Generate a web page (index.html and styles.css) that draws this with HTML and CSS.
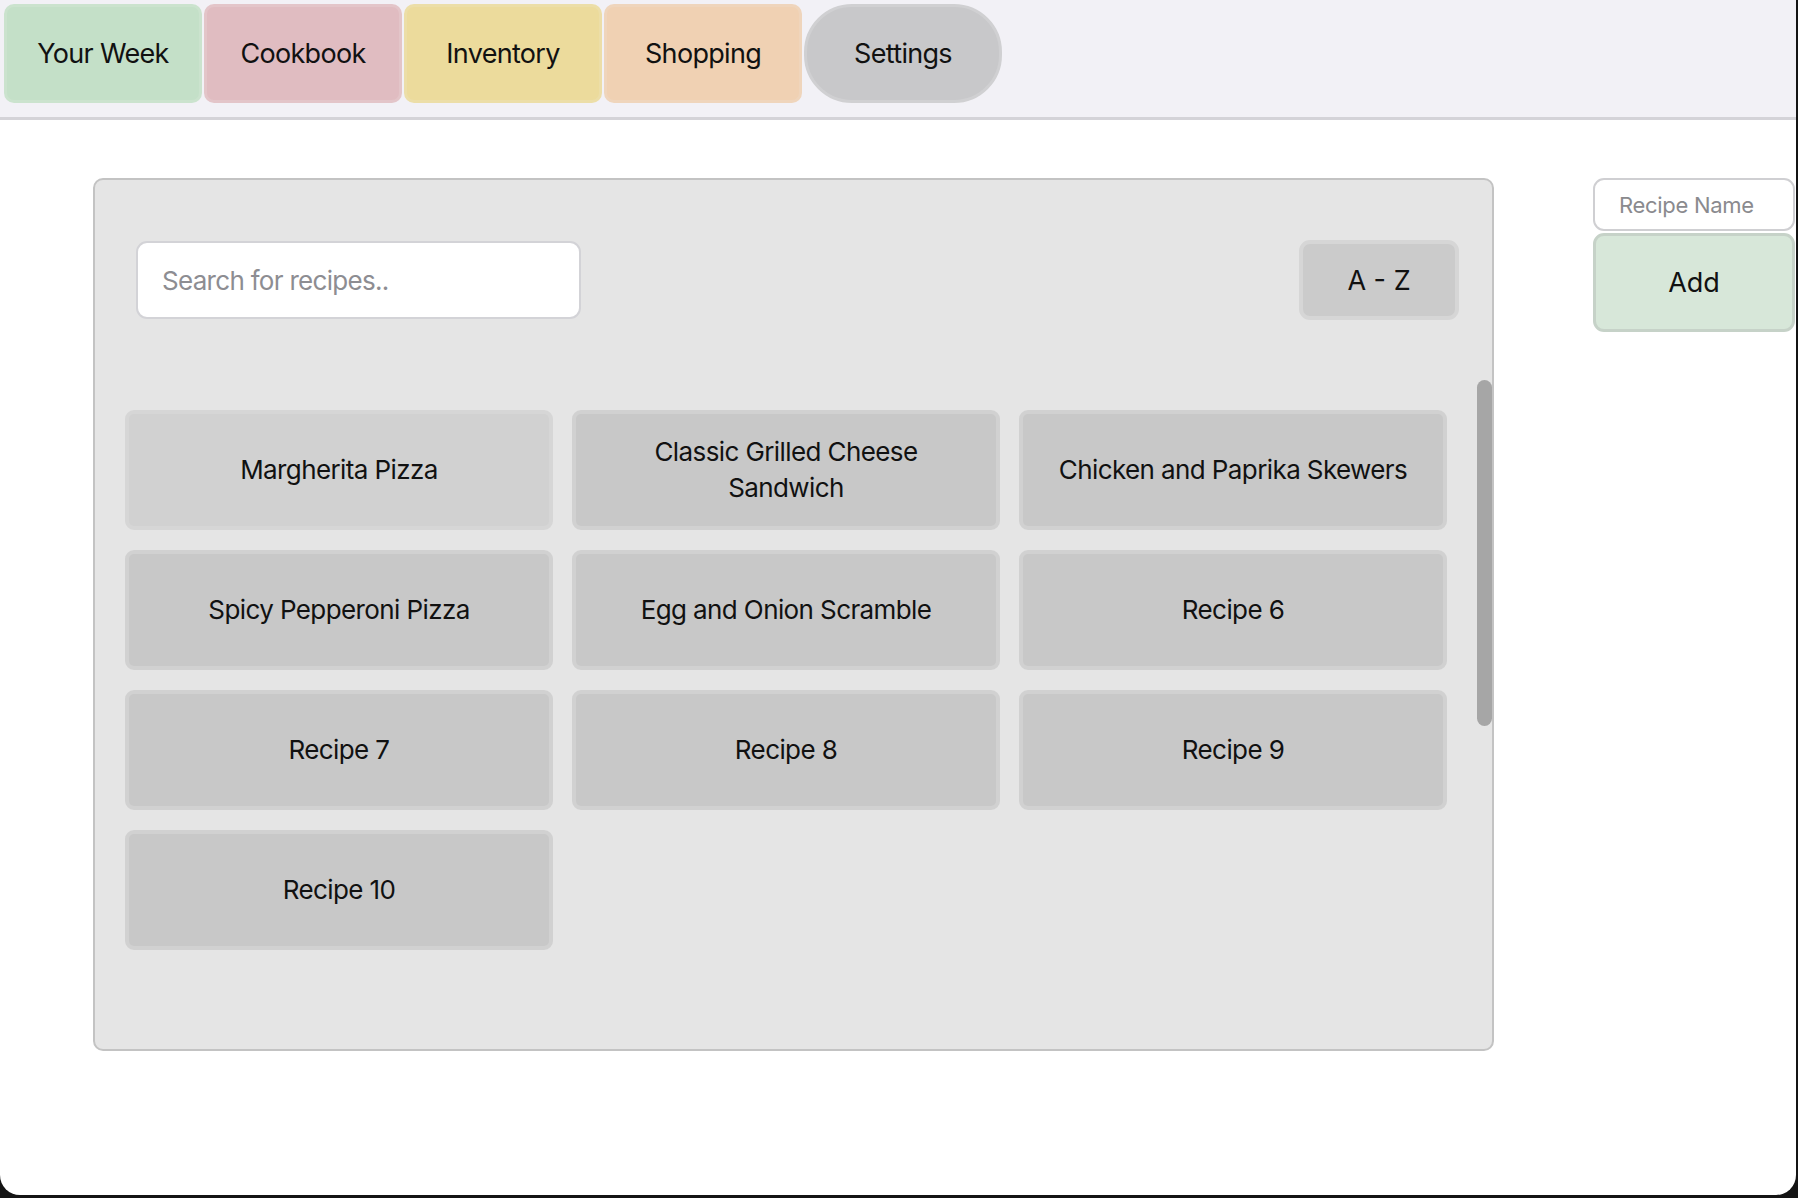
FILE: index.html
```html
<!DOCTYPE html>
<html lang="en">
<head>
<meta charset="utf-8">
<title>Cookbook</title>
<link rel="stylesheet" href="styles.css">
</head>
<body>
<div class="app">
  <nav class="tabs">
    <button class="tab tab-week">Your Week</button>
    <button class="tab tab-cookbook">Cookbook</button>
    <button class="tab tab-inventory">Inventory</button>
    <button class="tab tab-shopping">Shopping</button>
    <button class="tab tab-settings">Settings</button>
  </nav>
  <main class="main">
    <section class="panel">
      <div class="toolbar">
        <input class="search" type="text" placeholder="Search for recipes..">
        <button class="sort">A - Z</button>
      </div>
      <div class="grid">
        <button class="card card-hover">Margherita Pizza</button>
        <button class="card">Classic Grilled Cheese Sandwich</button>
        <button class="card">Chicken and Paprika Skewers</button>
        <button class="card">Spicy Pepperoni Pizza</button>
        <button class="card">Egg and Onion Scramble</button>
        <button class="card">Recipe 6</button>
        <button class="card">Recipe 7</button>
        <button class="card">Recipe 8</button>
        <button class="card">Recipe 9</button>
        <button class="card">Recipe 10</button>
      </div>
      <div class="thumb"></div>
    </section>
    <aside class="side">
      <input class="name-input" type="text" placeholder="Recipe Name">
      <button class="add">Add</button>
    </aside>
  </main>
</div>
</body>
</html>
```
FILE: styles.css
```css
html, body {
  margin: 0;
  padding: 0;
  background: #141414;
}
* { box-sizing: border-box; }

.app {
  width: 1796px;
  height: 1195px;
  background: #ffffff;
  border-radius: 0 0 20px 20px;
  overflow: hidden;
  font-family: Inter, "Noto Sans", sans-serif;
  color: #111;
}

button, input {
  font-family: Inter, "Noto Sans", sans-serif;
  margin: 0;
}

.tabs {
  display: flex;
  gap: 2px;
  padding: 4px 0 0 4px;
  height: 120px;
  background: #f2f1f6;
  border-bottom: 3px solid #d4d3d8;
}

.tab {
  width: 198px;
  height: 99px;
  border-radius: 10px;
  border: 3px solid;
  font-size: 27px;
  letter-spacing: -0.7px;
  color: #111;
  padding: 0;
}
.tab-week { background: #c4e0c8; border-color: #cbe3ce; }
.tab-cookbook { background: #e0bcc1; border-color: #e3c5c9; }
.tab-inventory { background: #ecdb9c; border-color: #ecdea8; }
.tab-shopping { background: #f0d1b3; border-color: #efd5bc; }
.tab-settings { background: #c8c8ca; border-color: #d0d0d2; border-radius: 48px; }

.main {
  display: flex;
  align-items: flex-start;
  padding: 58px 0 0 93px;
}

.panel {
  position: relative;
  width: 1401px;
  height: 873px;
  background: #e5e5e5;
  border: 2px solid #c3c3c3;
  border-radius: 10px;
  flex-shrink: 0;
}

.toolbar {
  display: flex;
  justify-content: space-between;
  align-items: center;
  padding: 60px 33px 0 41px;
}

.search {
  width: 445px;
  height: 78px;
  background: #fff;
  border: 2px solid #d3d3d7;
  border-radius: 11px;
  padding: 0 0 0 24px;
  font-size: 26px;
  letter-spacing: -0.7px;
  outline: none;
}
.search::placeholder { color: #8d8d92; }

.sort {
  width: 160px;
  height: 80px;
  background: #cbcbcb;
  border: 4px solid #d6d6d6;
  border-radius: 11px;
  font-size: 27px;
  color: #111;
  padding: 0;
}

.grid {
  display: grid;
  grid-template-columns: repeat(3, 428px);
  grid-auto-rows: 120px;
  gap: 20px 19px;
  padding: 90px 0 0 30px;
}

.card {
  background: #c8c8c8;
  border: 4px solid #d1d1d1;
  border-radius: 9px;
  font-size: 26px;
  letter-spacing: -0.6px;
  line-height: 36px;
  color: #111;
  padding: 0 22px;
}
.card-hover {
  background: #d1d1d1;
  border-color: #d6d6d6;
}

.thumb {
  position: absolute;
  right: 0;
  top: 200px;
  width: 15px;
  height: 346px;
  border-radius: 8px;
  background: #a6a6a6;
}

.side {
  display: flex;
  flex-direction: column;
  gap: 2px;
  margin-left: 99px;
  width: 202px;
  flex-shrink: 0;
}

.name-input {
  width: 202px;
  height: 53px;
  background: #fff;
  border: 2px solid #cfcfd2;
  border-radius: 11px;
  padding: 0 0 0 24px;
  font-size: 22px;
  letter-spacing: -0.3px;
  outline: none;
}
.name-input::placeholder { color: #8a8a8e; }

.add {
  width: 202px;
  height: 99px;
  background: #d7e7d9;
  border: 3px solid #c6d2c8;
  border-radius: 11px;
  font-size: 27px;
  color: #111;
  padding: 0;
}
```
